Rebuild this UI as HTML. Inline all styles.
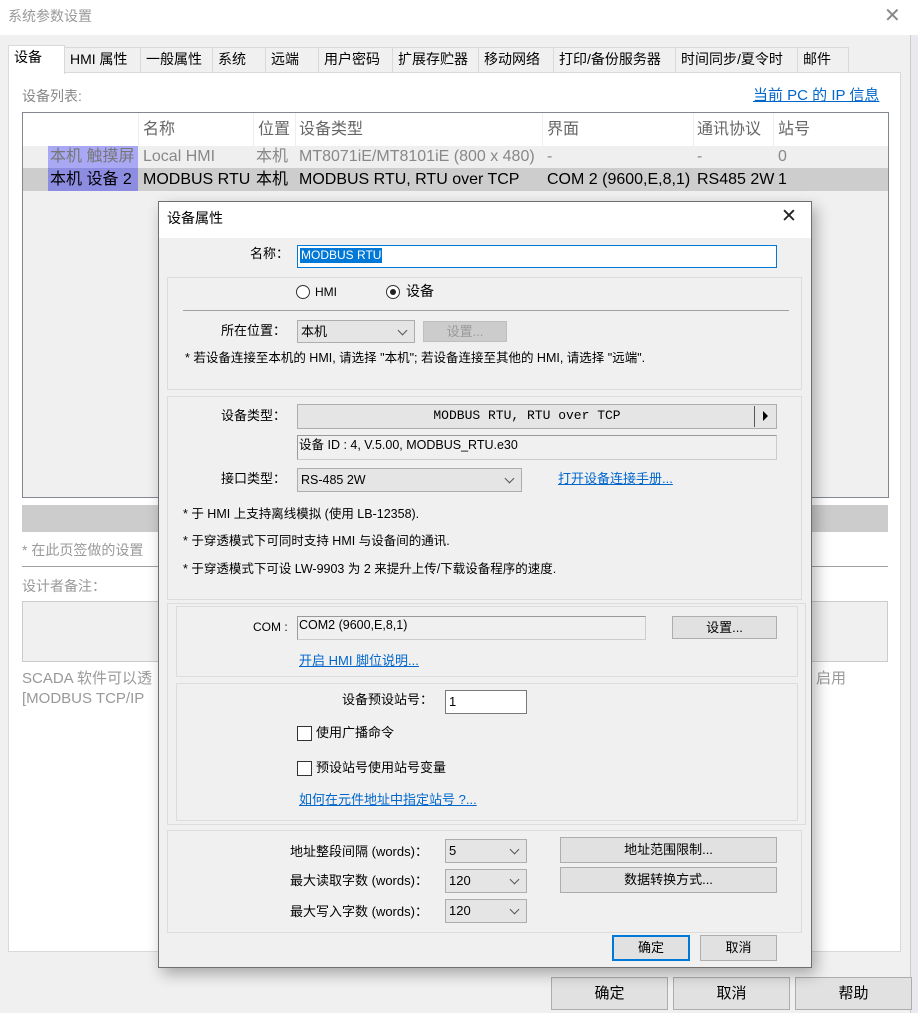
<!DOCTYPE html>
<html><head><meta charset="utf-8"><style>
*{box-sizing:border-box;margin:0;padding:0}
body{width:918px;height:1013px;background:#f0f0f0;position:relative;overflow:hidden;font-family:"Liberation Sans","Noto Sans CJK SC",sans-serif;font-size:14px;color:#000;line-height:1.2}
.a{position:absolute;white-space:nowrap}
.tab{position:absolute;top:47px;height:25px;border:1px solid #d9d9d9;border-bottom:none;background:#f0f0f0;font-size:14px;line-height:23px;padding-left:5px}
.btn{position:absolute;background:#e1e1e1;border:1px solid #adadad;text-align:center;font-size:13px}
.cb{position:absolute;background:#e5e5e5;border:1px solid #adadad;font-size:13px;padding-left:3px}
.cb::after{content:"";position:absolute;right:8px;top:6px;width:6px;height:6px;border-right:1px solid #555;border-bottom:1px solid #555;transform:rotate(45deg)}
.grp{position:absolute;border:1px solid #dcdcdc}
.lnk{position:absolute;color:#0066cc;text-decoration:underline;font-size:13px;white-space:nowrap}
.d{font-size:13px}
.t .a{line-height:22px;font-size:16px}
</style></head><body>
<div class="a" style="left:0;top:0;width:918px;height:35px;background:#fff"></div>
<div class="a" style="left:8px;top:8px;color:#999;font-size:14px">系统参数设置</div>
<div class="a" style="left:884px;top:4px;color:#888;font-size:20px">✕</div>
<div class="a" style="left:910px;top:35px;width:8px;height:978px;background:#e8eaf0;border-left:1px solid #ccc"></div>
<div class="tab" style="left:64px;width:77px">HMI 属性</div>
<div class="tab" style="left:140px;width:73px">一般属性</div>
<div class="tab" style="left:212px;width:54px">系统</div>
<div class="tab" style="left:265px;width:54px">远端</div>
<div class="tab" style="left:318px;width:75px">用户密码</div>
<div class="tab" style="left:392px;width:87px">扩展存贮器</div>
<div class="tab" style="left:478px;width:76px">移动网络</div>
<div class="tab" style="left:553px;width:123px">打印/备份服务器</div>
<div class="tab" style="left:675px;width:123px">时间同步/夏令时</div>
<div class="tab" style="left:797px;width:52px">邮件</div>
<div class="a" style="left:8px;top:72px;width:893px;height:880px;background:#fff;border:1px solid #d9d9d9"></div>
<div class="tab" style="left:8px;top:45px;width:57px;height:29px;background:#fff;border-color:#d9d9d9">设备</div>
<div class="a" style="left:22px;top:88px;color:#888;font-size:14px">设备列表:</div>
<div class="a" style="left:753px;top:87px;color:#0066cc;text-decoration:underline;font-size:15px">当前 PC 的 IP 信息</div>
<div class="a" style="left:22px;top:112px;width:867px;height:386px;border:1px solid #828790;background:#f0f0f0"></div>
<div class="a" style="left:23px;top:113px;width:865px;height:33px;background:#fff"></div>
<div class="a" style="left:23px;top:146px;width:865px;height:22px;background:#efefef"></div>
<div class="a" style="left:23px;top:168px;width:865px;height:23px;background:#cdcdcd"></div>
<div class="a" style="left:48px;top:146px;width:90px;height:22px;background:#a8a8f4"></div>
<div class="a" style="left:48px;top:168px;width:90px;height:23px;background:#8c8ce0"></div>
<div class="a" style="top:113px;left:138px;width:1px;height:33px;background:#eee"></div>
<div class="a" style="top:113px;left:253px;width:1px;height:33px;background:#eee"></div>
<div class="a" style="top:113px;left:295px;width:1px;height:33px;background:#eee"></div>
<div class="a" style="top:113px;left:542px;width:1px;height:33px;background:#eee"></div>
<div class="a" style="top:113px;left:693px;width:1px;height:33px;background:#eee"></div>
<div class="a" style="top:113px;left:773px;width:1px;height:33px;background:#eee"></div>
<div class="t" style="color:#666">
<div class="a" style="left:143px;top:119px">名称</div><div class="a" style="left:258px;top:119px">位置</div><div class="a" style="left:299px;top:119px">设备类型</div><div class="a" style="left:547px;top:119px">界面</div><div class="a" style="left:697px;top:119px">通讯协议</div><div class="a" style="left:778px;top:119px">站号</div>
</div>
<div class="t" style="color:#888">
<div class="a" style="left:50px;top:146px;color:#777">本机 触摸屏</div><div class="a" style="left:143px;top:146px">Local HMI</div><div class="a" style="left:256px;top:146px">本机</div><div class="a" style="left:299px;top:146px">MT8071iE/MT8101iE (800 x 480)</div><div class="a" style="left:547px;top:146px">-</div><div class="a" style="left:697px;top:146px">-</div><div class="a" style="left:778px;top:146px">0</div>
</div>
<div class="t" style="color:#000">
<div class="a" style="left:50px;top:169px">本机 设备 2</div><div class="a" style="left:143px;top:169px">MODBUS RTU</div><div class="a" style="left:256px;top:169px">本机</div><div class="a" style="left:299px;top:169px">MODBUS RTU, RTU over TCP</div><div class="a" style="left:547px;top:169px">COM 2 (9600,E,8,1)</div><div class="a" style="left:697px;top:169px">RS485 2W</div><div class="a" style="left:778px;top:169px">1</div>
</div>
<div class="a" style="left:22px;top:505px;width:866px;height:27px;background:#ccc"></div>
<div class="a" style="left:22px;top:542px;color:#999;font-size:14px">* 在此页签做的设置</div>
<div class="a" style="left:22px;top:566px;width:866px;height:1px;background:#a0a0a0"></div>
<div class="a" style="left:22px;top:578px;color:#999;font-size:14px">设计者备注：</div>
<div class="a" style="left:22px;top:601px;width:866px;height:61px;border:1px solid #ccc;background:#f0f0f0"></div>
<div class="a" style="left:22px;top:670px;color:#999;font-size:15px">SCADA 软件可以透</div>
<div class="a" style="left:22px;top:690px;color:#999;font-size:15px">[MODBUS TCP/IP</div>
<div class="a" style="left:816px;top:670px;color:#999;font-size:15px">启用</div>
<div class="btn" style="left:551px;top:977px;width:117px;height:33px;font-size:15px;line-height:31px">确定</div>
<div class="btn" style="left:673px;top:977px;width:117px;height:33px;font-size:15px;line-height:31px">取消</div>
<div class="btn" style="left:795px;top:977px;width:117px;height:33px;font-size:15px;line-height:31px">帮助</div>

<div class="a" style="left:158px;top:201px;width:654px;height:767px;background:#f0f0f0;border:1px solid #6f6f6f;box-shadow:4px 6px 14px rgba(0,0,0,.3)"></div>
<div class="a" style="left:159px;top:202px;width:652px;height:36px;background:#fff"></div>
<div class="a" style="left:167px;top:210px;font-size:14px">设备属性</div>
<div class="a" style="left:781px;top:206px;font-size:19px;color:#222">✕</div>
<div class="a d" style="left:250px;top:246px">名称：</div>
<div class="a" style="left:297px;top:245px;width:480px;height:23px;border:1px solid #0078d7;background:#fff"></div>
<div class="a d" style="left:300px;top:248px;background:#0078d7;color:#fff;font-size:12px;line-height:15px;padding:0 1px">MODBUS RTU</div>
<div class="grp" style="left:167px;top:277px;width:635px;height:113px"></div>
<div class="a" style="left:296px;top:285px;width:14px;height:14px;border:1px solid #333;border-radius:50%;background:#fff"></div>
<div class="a d" style="left:315px;top:285px;font-size:12px">HMI</div>
<div class="a" style="left:386px;top:285px;width:14px;height:14px;border:1px solid #333;border-radius:50%;background:#fff"></div>
<div class="a" style="left:390px;top:289px;width:6px;height:6px;border-radius:50%;background:#222"></div>
<div class="a d" style="left:406px;top:283px;font-size:14px">设备</div>
<div class="a" style="left:183px;top:310px;width:606px;height:1px;background:#a0a0a0"></div>
<div class="a d" style="left:221px;top:323px">所在位置：</div>
<div class="cb" style="left:297px;top:320px;width:118px;height:23px;line-height:21px">本机</div>
<div class="btn" style="left:423px;top:321px;width:84px;height:21px;color:#999;background:#ccc;border-color:#bfbfbf;line-height:19px">设置...</div>
<div class="a d" style="left:185px;top:351px;font-size:12.5px">* 若设备连接至本机的 HMI, 请选择 "本机"; 若设备连接至其他的 HMI, 请选择 "远端".</div>
<div class="grp" style="left:167px;top:396px;width:635px;height:204px"></div>
<div class="a d" style="left:221px;top:408px">设备类型：</div>
<div class="a" style="left:297px;top:404px;width:480px;height:25px;background:#e5e5e5;border:1px solid #adadad"></div>
<div class="a" style="left:300px;top:408px;width:454px;text-align:center;font-family:'Liberation Mono',monospace;font-size:13px">MODBUS RTU, RTU over TCP</div>
<div class="a" style="left:754px;top:406px;width:1px;height:21px;background:#555"></div>
<div class="a" style="left:763px;top:411px;width:0;height:0;border-left:5px solid #000;border-top:5px solid transparent;border-bottom:5px solid transparent"></div>
<div class="a" style="left:297px;top:435px;width:480px;height:25px;border:1px solid #ccc;border-top-color:#999;border-left-color:#999;background:#f0f0f0"></div>
<div class="a d" style="left:299px;top:438px;font-size:12.5px">设备 ID : 4, V.5.00, MODBUS_RTU.e30</div>
<div class="a d" style="left:221px;top:471px">接口类型：</div>
<div class="cb" style="left:297px;top:468px;width:225px;height:24px;line-height:22px;font-size:12.5px">RS-485 2W</div>
<div class="lnk" style="left:558px;top:471px">打开设备连接手册...</div>
<div class="a d" style="left:183px;top:507px;font-size:12.5px">* 于 HMI 上支持离线模拟 (使用 LB-12358).</div>
<div class="a d" style="left:183px;top:534px;font-size:12.5px">* 于穿透模式下可同时支持 HMI 与设备间的通讯.</div>
<div class="a d" style="left:183px;top:562px;font-size:12.5px">* 于穿透模式下可设 LW-9903 为 2 来提升上传/下载设备程序的速度.</div>
<div class="grp" style="left:167px;top:603px;width:639px;height:222px"></div>
<div class="grp" style="left:176px;top:606px;width:622px;height:71px"></div>
<div class="a d" style="left:253px;top:620px;font-size:12px">COM :</div>
<div class="a" style="left:297px;top:616px;width:349px;height:24px;border:1px solid #ccc;border-top-color:#999;border-left-color:#999"></div>
<div class="a d" style="left:299px;top:618px;font-size:12.5px">COM2 (9600,E,8,1)</div>
<div class="btn" style="left:672px;top:616px;width:105px;height:23px;line-height:21px">设置...</div>
<div class="lnk" style="left:299px;top:653px">开启 HMI 脚位说明...</div>
<div class="grp" style="left:176px;top:683px;width:622px;height:138px"></div>
<div class="a d" style="left:342px;top:692px">设备预设站号：</div>
<div class="a" style="left:445px;top:690px;width:82px;height:24px;border:1px solid #7a7a7a;background:#fff"></div>
<div class="a d" style="left:449px;top:694px">1</div>
<div class="a" style="left:297px;top:726px;width:15px;height:15px;border:1px solid #333;background:#fff"></div>
<div class="a d" style="left:316px;top:725px">使用广播命令</div>
<div class="a" style="left:297px;top:761px;width:15px;height:15px;border:1px solid #333;background:#fff"></div>
<div class="a d" style="left:316px;top:760px">预设站号使用站号变量</div>
<div class="lnk" style="left:299px;top:792px">如何在元件地址中指定站号 ?...</div>
<div class="grp" style="left:167px;top:830px;width:635px;height:103px"></div>
<div class="a d" style="left:290px;top:844px">地址整段间隔 (words)：</div>
<div class="a d" style="left:290px;top:873px">最大读取字数 (words)：</div>
<div class="a d" style="left:290px;top:904px">最大写入字数 (words)：</div>
<div class="cb" style="left:445px;top:839px;width:82px;height:24px;line-height:22px">5</div>
<div class="cb" style="left:445px;top:869px;width:82px;height:24px;line-height:22px">120</div>
<div class="cb" style="left:445px;top:899px;width:82px;height:24px;line-height:22px">120</div>
<div class="btn" style="left:560px;top:837px;width:217px;height:26px;line-height:24px">地址范围限制...</div>
<div class="btn" style="left:560px;top:867px;width:217px;height:26px;line-height:24px">数据转换方式...</div>
<div class="btn" style="left:612px;top:935px;width:78px;height:26px;line-height:22px;border:2px solid #0078d7">确定</div>
<div class="btn" style="left:700px;top:935px;width:77px;height:26px;line-height:24px">取消</div>
</body></html>
